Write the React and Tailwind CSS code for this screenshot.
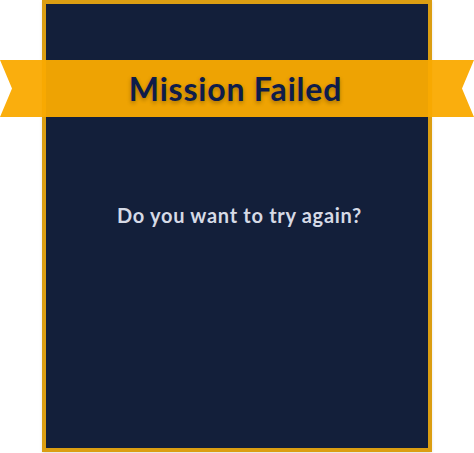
export default function App() {
  return (
    <div className="relative w-[474px] h-[453px] bg-white font-['Lato',sans-serif]">
      <div className="ml-[42px] w-[390px] h-[452px] border-4 border-[#DB9E12] bg-[#131F3A] shadow-sm flex flex-col items-center">
        <p className="mt-[197px] ml-[5px] text-[20px] leading-[28px] font-bold text-[#D6DAE6] tracking-[0.7px]">
          Do you want to try again?
        </p>
      </div>
      <div className="absolute left-0 top-[60px] w-[474px] h-[57px] bg-[#F9A900]/95 [clip-path:polygon(0_0,100%_0,calc(100%_-_12px)_50%,100%_100%,0_100%,12px_50%)] flex items-center justify-center">
        <h1 className="text-[32px] leading-[34px] font-bold text-[#0E1C4A] tracking-[0.8px] [text-shadow:0_2px_4px_rgba(0,0,0,0.3)] -ml-[3px]">
          Mission Failed
        </h1>
      </div>
    </div>
  );
}
